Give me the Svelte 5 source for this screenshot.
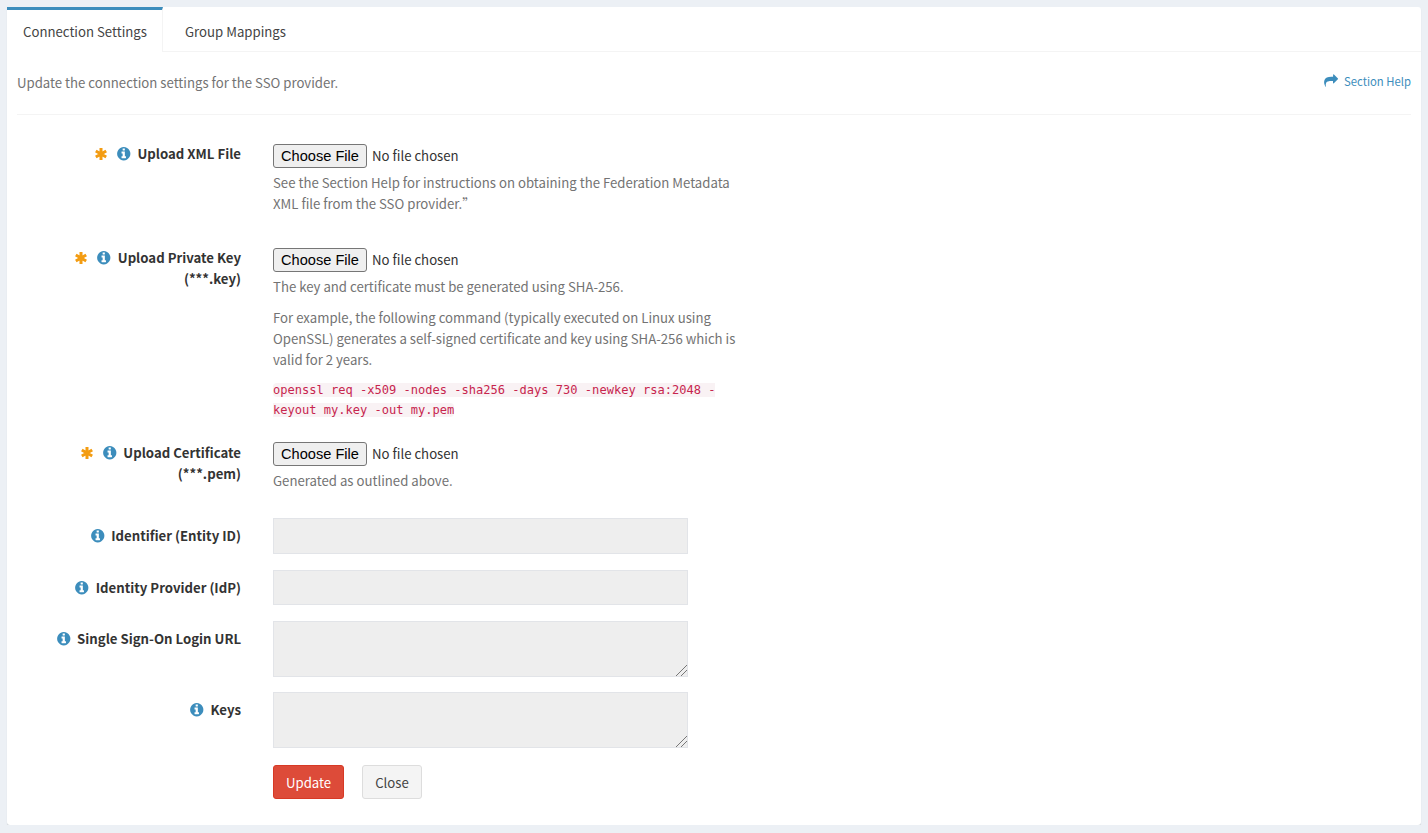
<script>
  const fields = [
    { label: 'Identifier (Entity ID)', type: 'input' },
    { label: 'Identity Provider (IdP)', type: 'input' },
    { label: 'Single Sign-On Login URL', type: 'textarea' },
    { label: 'Keys', type: 'textarea' }
  ];

  const info = 'M1152 1376v-160q0-14-9-23t-23-9h-96v-512q0-14-9-23t-23-9h-320q-14 0-23 9t-9 23v160q0 14 9 23t23 9h96v320h-96q-14 0-23 9t-9 23v160q0 14 9 23t23 9h448q14 0 23-9t9-23zm-128-896v-160q0-14-9-23t-23-9h-192q-14 0-23 9t-9 23v160q0 14 9 23t23 9h192q14 0 23-9t9-23zm640 416q0 209-103 385.500t-279.500 279.500-385.500 103-385.500-103-279.500-279.500-103-385.500 103-385.500 279.500-279.500 385.500-103 385.500 103 279.500 279.500 103 385.500z';
  const share = 'M1792 640q0 26-19 45l-512 512q-19 19-45 19t-45-19-19-45v-256h-224q-98 0-175.500 6t-154 21.500-133 42.500-105.500 69.500-72.500 96-44.500 131-16 173.500q0 54 5 121 0 6 2.500 23.500t2.500 26.500q0 15-8.500 25t-23.500 10q-16 0-28-17-7-9-13-22t-13.500-30-10.500-24q-127-285-127-451 0-199 53-333 162-403 875-403h224v-256q0-26 19-45t45-19 45 19l512 512q19 19 19 45z';
</script>

{#snippet labelIcons(required)}
  {#if required}
    <svg class="star" viewBox="0 0 12 12">
      <path d="M6 0V12M.8 3 11.200 9M.8 9 11.200 3" />
    </svg>
  {/if}
  <svg class="info" viewBox="0 0 1792 1792"><path d={info} /></svg>
{/snippet}

<div class="card">
  <div class="tabs">
    <div class="tab active">Connection Settings</div>
    <div class="tab">Group Mappings</div>
  </div>

  <div class="intro">
    <span>Update the connection settings for the SSO provider.</span>
    <span class="help-link">
      <svg viewBox="0 0 1792 1792"><path d={share} /></svg>
      Section Help
    </span>
  </div>

  <form class="form">
    <div class="row file-row">
      <div class="label">{@render labelIcons(true)}<b>Upload XML File</b></div>
      <div class="control">
        <input type="file" />
        <p class="hint">See the Section Help for instructions on obtaining the Federation Metadata XML file from the SSO provider.”</p>
      </div>
    </div>

    <div class="row file-row">
      <div class="label">{@render labelIcons(true)}<b>Upload Private Key (***.key)</b></div>
      <div class="control">
        <input type="file" />
        <p class="hint">The key and certificate must be generated using SHA-256.</p>
        <p class="hint">For example, the following command (typically executed on Linux using OpenSSL) generates a self-signed certificate and key using SHA-256 which is valid for 2 years.</p>
        <p class="cmd"><code>openssl req -x509 -nodes -sha256 -days 730 -newkey rsa:2048 -keyout my.key -out my.pem</code></p>
      </div>
    </div>

    <div class="row file-row last">
      <div class="label">{@render labelIcons(true)}<b>Upload Certificate (***.pem)</b></div>
      <div class="control">
        <input type="file" />
        <p class="hint">Generated as outlined above.</p>
      </div>
    </div>

    {#each fields as f}
      <div class="row field-row {f.type}">
        <div class="label">{@render labelIcons(false)}<b>{f.label}</b></div>
        <div class="control">
          {#if f.type === 'input'}
            <input class="box" type="text" readonly />
          {:else}
            <textarea class="box" readonly></textarea>
          {/if}
        </div>
      </div>
    {/each}

    <div class="row actions-row">
      <div></div>
      <div class="actions">
        <button type="button" class="btn-update">Update</button>
        <button type="button" class="btn-close">Close</button>
      </div>
    </div>
  </form>
</div>

<style>
  :global(body) {
    background: #ecf0f5;
    font-family: 'Noto Sans CJK SC', 'Open Sans', sans-serif;
    font-size: 13.2px;
    line-height: 21px;
    color: #333;
  }

  .card {
    margin: 7px 7px 0;
    height: 818px;
    background: #fff;
    border-radius: 3px;
    box-shadow: 0 1px 1px rgba(0, 0, 0, 0.15);
    box-sizing: border-box;
  }

  .tabs {
    display: flex;
    height: 45px;
    border-bottom: 1px solid #f4f4f4;
    box-sizing: border-box;
  }

  .tab {
    padding: 14px 16px 0 22px;
    color: #444;
    box-sizing: border-box;
  }

  .tab.active {
    width: 156px;
    padding-left: 16px;
    padding-right: 0;
    border-top: 3px solid #3c8dbc;
    border-right: 1px solid #f4f4f4;
    padding-top: 11px;
    height: 45px;
    background: #fff;
  }

  .intro {
    display: flex;
    justify-content: space-between;
    margin: 0 10px;
    height: 63px;
    padding-top: 20px;
    border-bottom: 1px solid #f4f4f4;
    box-sizing: border-box;
    color: #737373;
  }

  .help-link {
    color: #3c8dbc;
    font-size: 11.3px;
    margin-top: -1px;
  }

  .help-link svg {
    width: 14px;
    height: 14px;
    fill: #3c8dbc;
    vertical-align: -2px;
    margin-right: 4px;
  }

  .form {
    padding-top: 29px;
  }

  .row {
    display: grid;
    grid-template-columns: 234px 1fr;
    column-gap: 32px;
  }

  .label {
    text-align: right;
    padding-left: 31px;
    margin-top: -1px;
    font-weight: 700;
    color: #333;
  }

  .label b {
    font-weight: 700;
    margin-left: 6px;
  }

  .star {
    width: 12px;
    height: 12px;
    fill: none;
    stroke: #f39c12;
    stroke-width: 3;
    vertical-align: -1px;
    margin-right: 9px;
  }

  .info {
    width: 15.5px;
    height: 15.5px;
    fill: #3c8dbc;
    vertical-align: -2.5px;
  }

  .control {
    min-width: 0;
  }

  .file-row {
    margin-bottom: 24px;
  }

  .file-row.last {
    margin-bottom: 17px;
  }

  .file-row.last .label {
    padding-top: 1px;
  }

  input[type='file'] {
    display: block;
    font: inherit;
    color: #333;
    height: 24px;
  }

  input[type='file']::file-selector-button {
    font-family: 'Liberation Sans', sans-serif;
    font-size: 14.6px;
    width: 94px;
    height: 24px;
    padding: 0 0 1px;
    margin-right: 5px;
    border: 1px solid #767676;
    border-radius: 3px;
    background: #efefef;
  }

  .hint {
    margin: 4px 0 10px;
    width: 465px;
    color: #737373;
  }

  .cmd {
    margin: 0 0 -2px;
    width: 465px;
    font-family: 'DejaVu Sans Mono', monospace;
    font-size: 12.05px;
    line-height: 20px;
  }

  code {
    font: inherit;
    color: #c7254e;
    background: #f9f2f4;
    border-radius: 4px;
  }

  .field-row.input {
    margin-bottom: 16px;
  }

  .field-row.textarea {
    margin-bottom: 15px;
  }

  .field-row .label {
    padding-top: 8px;
  }

  .box {
    display: block;
    width: 415px;
    height: 35.5px;
    box-sizing: border-box;
    background: #eee;
    border: 1px solid #e2e4e8;
    outline: none;
    margin: 0;
    font: inherit;
  }

  textarea.box {
    height: 56px;
    resize: vertical;
  }

  textarea.box::-webkit-resizer {
    background: linear-gradient(
      135deg,
      transparent 62%,
      #777 62%,
      #777 66%,
      transparent 66%,
      transparent 78%,
      #777 78%,
      #777 82%,
      transparent 82%
    );
  }

  .actions {
    display: flex;
    gap: 18px;
    margin-top: 2px;
  }

  button {
    height: 34px;
    border-radius: 3px;
    font: inherit;
    padding: 0 12px;
    border: 1px solid;
  }

  .btn-update {
    background: #dd4b39;
    border-color: #d73925;
    color: #fff;
  }

  .btn-close {
    background: #f4f4f4;
    border-color: #ddd;
    color: #444;
  }
</style>
